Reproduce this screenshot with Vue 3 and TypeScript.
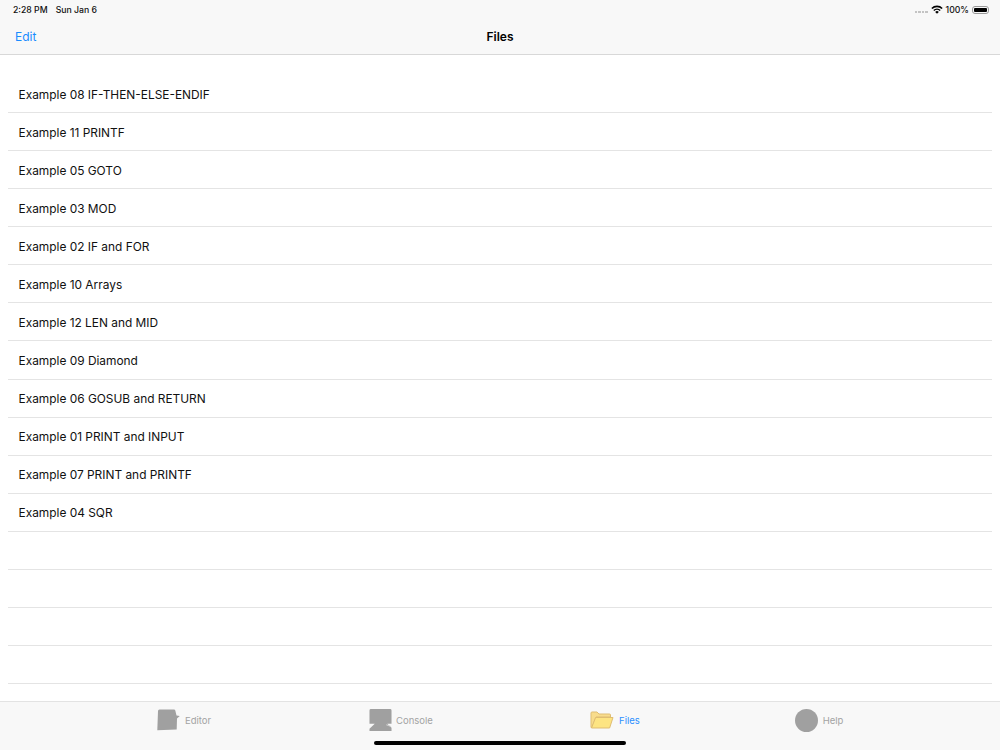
<script setup lang="ts">
const rows: string[] = [
  'Example 08 IF-THEN-ELSE-ENDIF',
  'Example 11 PRINTF',
  'Example 05 GOTO',
  'Example 03 MOD',
  'Example 02 IF and FOR',
  'Example 10 Arrays',
  'Example 12 LEN and MID',
  'Example 09 Diamond',
  'Example 06 GOSUB and RETURN',
  'Example 01 PRINT and INPUT',
  'Example 07 PRINT and PRINTF',
  'Example 04 SQR',
  '', '', '', '',
]
</script>

<template>
  <div class="page">
    <header class="top">
      <div class="status">
        <div class="clock"><span>2:28 PM</span><span>Sun Jan 6</span></div>
        <div class="sys">
          <span class="signal"><i v-for="n in 4" :key="n"></i></span>
          <svg class="wifi" width="12" height="9" viewBox="0 0 12 9">
            <path d="M0.3 3A8 8 0 0 1 11.7 3L10.6 4.1A6.5 6.5 0 0 0 1.4 4.1Z" fill="#000" />
            <path d="M2.3 5A5.2 5.2 0 0 1 9.7 5L8.7 6A3.8 3.8 0 0 0 3.3 6Z" fill="#000" />
            <path d="M4.2 6.9A2.6 2.6 0 0 1 7.8 6.9L6 8.8Z" fill="#000" />
          </svg>
          <span class="pct">100%</span>
          <span class="battery"><b></b></span>
        </div>
      </div>
      <nav class="navbar">
        <span class="edit">Edit</span>
        <span class="title">Files</span>
      </nav>
    </header>

    <main class="list">
      <div v-for="(row, i) in rows" :key="i" class="row">{{ row }}</div>
    </main>

    <footer class="tabs">
      <div class="tab">
        <svg width="23" height="22" viewBox="0 0 23 22">
          <path d="M2.5 0.5H17Q18 0.5 18.3 1.5L19.5 6.5L22.8 7L20 9.5L19.7 20.5L0.3 21.3L1 2Q1 0.5 2.5 0.5Z" fill="#a0a0a0" />
        </svg>
        <span>Editor</span>
      </div>
      <div class="tab console">
        <svg width="23" height="24" viewBox="0 0 24 24">
          <path d="M2 0.5H22Q23.5 0.5 23.5 2V16H19L23.5 20V23.5H0.5V21L6 16H0.5V2Q0.5 0.5 2 0.5Z" fill="#a0a0a0" />
          <path d="M18 17L23 18.8" stroke="#d4d4d4" stroke-width="1" />
        </svg>
        <span>Console</span>
      </div>
      <div class="tab active">
        <svg width="24" height="18" viewBox="0 0 24 18">
          <path d="M1 16.5V2Q1 1 2 1H7L9 3H19.5Q20.5 3 20.5 4V6H6L2 16.5Z" fill="#f8dc8c" stroke="#dfbd72" stroke-width="1" />
          <path d="M1.5 17L5.6 6.5H23L19.6 17Z" fill="#fde482" stroke="#dfbd72" stroke-width="1" stroke-linejoin="round" />
        </svg>
        <span>Files</span>
      </div>
      <div class="tab">
        <i class="circle"></i>
        <span>Help</span>
      </div>
    </footer>
    <div class="home"></div>
  </div>
</template>

<style scoped>
.page {
  position: relative;
  width: 1000px;
  height: 750px;
  display: flex;
  flex-direction: column;
  overflow: hidden;
  background: #fff;
  font-family: Inter, "Liberation Sans", sans-serif;
  color: #000;
}
.top {
  height: 55px;
  box-sizing: border-box;
  flex: none;
  background: #f8f8f8;
  border-bottom: 1px solid #d8d8d8;
}
.status {
  height: 18px;
  padding: 1px 11px 0 13px;
  box-sizing: border-box;
  display: flex;
  justify-content: space-between;
  align-items: center;
  font-size: 8.7px;
  font-weight: 500;
  color: #111;
}
.clock {
  display: flex;
  gap: 8px;
}
.sys {
  display: flex;
  align-items: center;
}
.signal {
  display: flex;
  gap: 1px;
  margin: 4px 3px 0 0;
}
.signal i {
  width: 2.5px;
  height: 2px;
  background: #c4c4c4;
}
.wifi {
  margin-right: 3px;
}
.battery {
  width: 17px;
  height: 8px;
  margin-left: 3px;
  padding: 1px;
  box-sizing: border-box;
  border: 1px solid #999;
  border-radius: 3px;
  display: block;
}
.battery b {
  display: block;
  height: 100%;
  background: #000;
  border-radius: 1px;
}
.navbar {
  position: relative;
  height: 36px;
  display: flex;
  align-items: center;
  justify-content: center;
}
.edit {
  position: absolute;
  left: 15px;
  font-size: 12px;
  color: #1a8cff;
}
.title {
  font-size: 12px;
  font-weight: 600;
}
.list {
  flex: 1;
  min-height: 0;
  padding: 20px 8px 0;
  overflow: hidden;
}
.row {
  height: 38.07px;
  box-sizing: border-box;
  padding: 1px 0 0 10.5px;
  display: flex;
  align-items: center;
  border-bottom: 1px solid #e4e4e4;
  font-size: 11.9px;
  color: #111;
}
.tabs {
  position: relative;
  flex: none;
  height: 49px;
  box-sizing: border-box;
  padding-left: 76px;
  display: grid;
  grid-template-columns: 216px 218px 210px 198px;
  background: #f8f8f8;
  border-top: 1px solid #e3e3e3;
}
.tab {
  height: 36px;
  display: flex;
  align-items: center;
  justify-content: center;
  gap: 5px;
  font-size: 9.5px;
  color: #a3a3a3;
}
.console {
  gap: 4px;
}
.active {
  color: #2b8fff;
}
.circle {
  width: 23px;
  height: 23px;
  border-radius: 50%;
  background: #a0a0a0;
}
.home {
  position: absolute;
  left: 374px;
  bottom: 5px;
  width: 252px;
  height: 4px;
  border-radius: 2px;
  background: #000;
}
</style>
